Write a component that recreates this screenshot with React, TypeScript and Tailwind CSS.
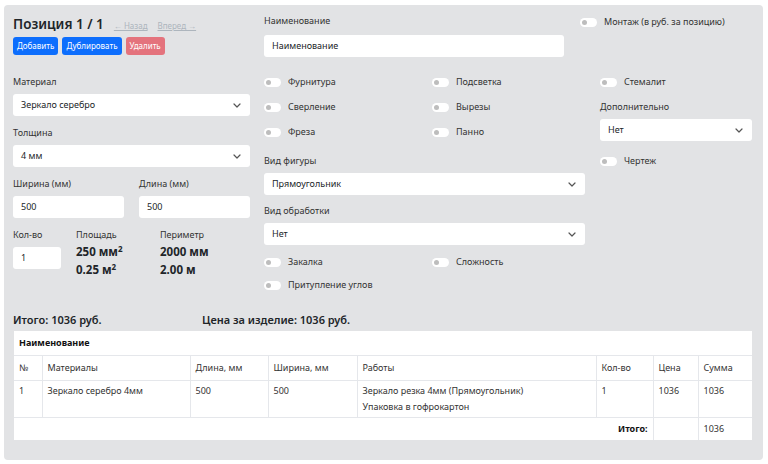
import React from "react";

function Chevron() {
  return (
    <svg className="w-[8px] h-[5px] text-[#555]" viewBox="0 0 8 5" fill="none" stroke="currentColor">
      <path d="M1 1l3 3 3-3" strokeWidth={1.2} strokeLinecap="round" strokeLinejoin="round" />
    </svg>
  );
}

function Select({ value, className = "" }: { value: string; className?: string }) {
  return (
    <div className={"flex items-center justify-between bg-white rounded-[3px] h-[22px] pl-[8px] pr-[9px] text-[9px] text-[#212529] " + className}>
      <span>{value}</span>
      <Chevron />
    </div>
  );
}

function Input({ value, className = "" }: { value: string; className?: string }) {
  return (
    <div className={"flex items-center bg-white rounded-[3px] h-[22px] px-[8px] text-[9px] text-[#212529] " + className}>
      {value}
    </div>
  );
}

function Label({ children, className = "" }: { children: React.ReactNode; className?: string }) {
  return <div className={"h-[14px] leading-[14px] text-[9px] text-[#333] " + className}>{children}</div>;
}

function Switch({ label, className = "" }: { label: string; className?: string }) {
  return (
    <div className={"flex items-center h-[14px] " + className}>
      <span className="flex items-center w-[17px] h-[9px] rounded-full bg-white pl-[2px]">
        <span className="w-[5px] h-[5px] rounded-full bg-[#bdbdbd]" />
      </span>
      <span className="ml-[7px] text-[9px] text-[#333]">{label}</span>
    </div>
  );
}

export default function App() {
  return (
    <div className="min-h-screen bg-white pt-[5px] pl-[4px] font-['Noto_Sans',sans-serif] text-[#212529]">
      <div className="w-[759px] bg-[#e2e3e5] rounded-[4px] pt-[9px] pl-[9px] pr-[11px] pb-[20px]">
        {/* Top row */}
        <div className="flex">
          <div className="w-[237px]">
            <div className="flex items-baseline h-[20px]">
              <span className="text-[13.5px] font-semibold leading-[20px]">Позиция 1 / 1</span>
              <span className="ml-[10px] text-[8px] text-[#adb5bd] underline">← Назад</span>
              <span className="ml-[10px] text-[8px] text-[#adb5bd] underline">Вперед →</span>
            </div>
            <div className="flex gap-[4px] mt-[3px]">
              <button className="h-[18px] px-[4px] rounded-[3px] bg-[#0d6efd] text-white text-[8px]">Добавить</button>
              <button className="h-[18px] px-[4px] rounded-[3px] bg-[#0d6efd] text-white text-[8px]">Дублировать</button>
              <button className="h-[18px] px-[4px] rounded-[3px] bg-[#e4737d] text-white text-[8px]">Удалить</button>
            </div>
          </div>
          <div className="ml-[14px] w-[300px]">
            <Label>Наименование</Label>
            <Input value="Наименование" className="mt-[7px]" />
          </div>
          <Switch label="Монтаж (в руб. за позицию)" className="ml-[16px] mt-[1px]" />
        </div>

        {/* Form */}
        <div className="flex mt-[18px]">
          {/* Left column */}
          <div className="w-[237px]">
            <Label>Материал</Label>
            <Select value="Зеркало серебро" className="mt-[5px]" />
            <Label className="mt-[10px]">Толщина</Label>
            <Select value="4 мм" className="mt-[5px]" />
            <div className="flex gap-[15px] mt-[10px]">
              <div className="w-[111px]">
                <Label>Ширина (мм)</Label>
                <Input value="500" className="mt-[5px]" />
              </div>
              <div className="flex-1">
                <Label>Длина (мм)</Label>
                <Input value="500" className="mt-[5px]" />
              </div>
            </div>
            <div className="flex mt-[10px]">
              <div className="w-[63px]">
                <Label>Кол-во</Label>
                <Input value="1" className="mt-[5px] w-[48px]" />
              </div>
              <div className="w-[84px]">
                <Label>Площадь</Label>
                <div className="text-[11.5px] font-bold leading-[18px] mt-[1px]">
                  250 мм<sup className="text-[8px]">2</sup>
                </div>
                <div className="text-[11.5px] font-bold leading-[18px]">
                  0.25 м<sup className="text-[8px]">2</sup>
                </div>
              </div>
              <div>
                <Label>Периметр</Label>
                <div className="text-[11.5px] font-bold leading-[18px] mt-[1px]">2000 мм</div>
                <div className="text-[11.5px] font-bold leading-[18px]">2.00 м</div>
              </div>
            </div>
          </div>

          {/* Middle column */}
          <div className="ml-[14px] w-[321px]">
            <div className="grid grid-cols-[168px_1fr] gap-y-[11px]">
              <Switch label="Фурнитура" />
              <Switch label="Подсветка" />
              <Switch label="Сверление" />
              <Switch label="Вырезы" />
              <Switch label="Фреза" />
              <Switch label="Панно" />
            </div>
            <Label className="mt-[15px]">Вид фигуры</Label>
            <Select value="Прямоугольник" className="mt-[5px]" />
            <Label className="mt-[9px]">Вид обработки</Label>
            <Select value="Нет" className="mt-[5px]" />
            <div className="grid grid-cols-[168px_1fr] gap-y-[9px] mt-[10px]">
              <Switch label="Закалка" />
              <Switch label="Сложность" />
              <Switch label="Притупление углов" />
            </div>
          </div>

          {/* Right column */}
          <div className="ml-[15px] w-[152px]">
            <Switch label="Стемалит" />
            <Label className="mt-[11px]">Дополнительно</Label>
            <Select value="Нет" className="mt-[5px]" />
            <Switch label="Чертеж" className="mt-[13px]" />
          </div>
        </div>

        {/* Totals */}
        <div className="flex mt-[20px] h-[16px] items-center text-[11px] font-semibold">
          <span className="w-[189px]">Итого: 1036 руб.</span>
          <span>Цена за изделие: 1036 руб.</span>
        </div>

        {/* Table */}
        <table className="mt-[3px] ml-[1px] w-[738px] table-fixed border-collapse bg-white text-[9px] text-[#333]">
          <colgroup>
            <col className="w-[28px]" />
            <col className="w-[148px]" />
            <col className="w-[78px]" />
            <col className="w-[89px]" />
            <col className="w-[239px]" />
            <col className="w-[57px]" />
            <col className="w-[45px]" />
            <col className="w-[54px]" />
          </colgroup>
          <tbody>
            <tr className="h-[24px]">
              <td colSpan={8} className="px-[5px] font-bold text-[#111]">Наименование</td>
            </tr>
            <tr className="h-[25px] border-t border-[#e5e7eb]">
              <td className="px-[5px]">№</td>
              <td className="px-[5px] border-l border-[#e5e7eb]">Материалы</td>
              <td className="px-[5px] border-l border-[#e5e7eb]">Длина, мм</td>
              <td className="px-[5px] border-l border-[#e5e7eb]">Ширина, мм</td>
              <td className="px-[5px] border-l border-[#e5e7eb]">Работы</td>
              <td className="px-[5px] border-l border-[#e5e7eb]">Кол-во</td>
              <td className="px-[5px] border-l border-[#e5e7eb]">Цена</td>
              <td className="px-[5px] border-l border-[#e5e7eb]">Сумма</td>
            </tr>
            <tr className="h-[37px] border-t border-[#e5e7eb] align-top leading-[16px]">
              <td className="px-[5px] pt-[2px]">1</td>
              <td className="px-[5px] pt-[2px] border-l border-[#e5e7eb]">Зеркало серебро 4мм</td>
              <td className="px-[5px] pt-[2px] border-l border-[#e5e7eb]">500</td>
              <td className="px-[5px] pt-[2px] border-l border-[#e5e7eb]">500</td>
              <td className="px-[5px] pt-[2px] border-l border-[#e5e7eb]">
                Зеркало резка 4мм (Прямоугольник)
                <br />
                Упаковка в гофрокартон
              </td>
              <td className="px-[5px] pt-[2px] border-l border-[#e5e7eb]">1</td>
              <td className="px-[5px] pt-[2px] border-l border-[#e5e7eb]">1036</td>
              <td className="px-[5px] pt-[2px] border-l border-[#e5e7eb]">1036</td>
            </tr>
            <tr className="h-[23px] border-t border-[#e5e7eb]">
              <td colSpan={6} className="px-[5px] text-right font-bold text-[#111]">Итого:</td>
              <td className="px-[5px] border-l border-[#e5e7eb]"></td>
              <td className="px-[5px] border-l border-[#e5e7eb]">1036</td>
            </tr>
          </tbody>
        </table>
      </div>
    </div>
  );
}
